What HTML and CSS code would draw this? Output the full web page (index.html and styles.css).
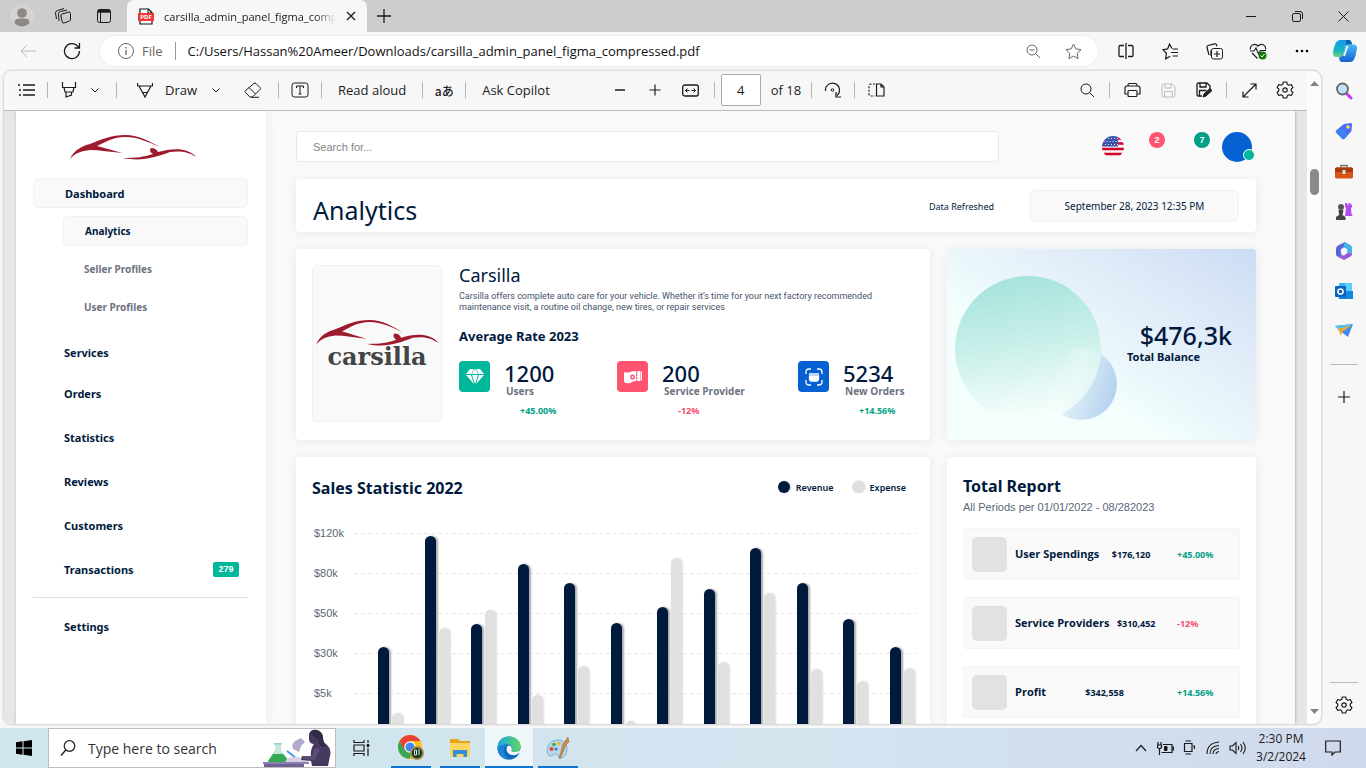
FILE: index.html
```html
<!DOCTYPE html>
<html lang="en">
<head>
<meta charset="utf-8">
<title>carsilla_admin_panel_figma_compressed.pdf</title>
<link rel="stylesheet" href="styles.css">
</head>
<body>

<svg class="defs" width="0" height="0" aria-hidden="true">
  <symbol id="car" viewBox="0 0 126 26">
    <path fill="#9d1b2c" d="M0 24C4 15 12 11 20 9C32 4 42 0 55 0C70 0 80 7 90 12C78 7 68 2 55 2C44 2 35 7 27 11C36 13 44 16 52 18C40 17 30 15 20 15C11 16 5 18 0 24Z"/>
    <path fill="#9d1b2c" d="M53 23C66 23 74 22 83 19C79 17 80 14 81 13C85 13 87 15 88 17C98 14 110 13 117 16C122 18 125 20 126 22C118 16 108 16 100 17C86 22 72 27 53 23Z"/>
  </symbol>
  <symbol id="gear" viewBox="0 0 18 18">
    <path fill="none" stroke="currentColor" stroke-width="1.2" stroke-linejoin="round" d="M7.3 1h3.4l.6 2.3 1.6.9 2.3-.7 1.7 3-1.7 1.6v1.8l1.7 1.6-1.7 3-2.3-.7-1.6.9-.6 2.3H7.300l-.6-2.300-1.600-.9-2.300.7-1.700-3 1.700-1.600V8.100L1.100 6.500l1.700-3 2.300.7 1.600-.9z"/>
    <circle cx="9" cy="9" r="2.200" fill="none" stroke="currentColor" stroke-width="1.200"/>
  </symbol>
  <symbol id="chev" viewBox="0 0 10 10"><path fill="none" stroke="currentColor" d="M1.500 3.500L5 7l3.500-3.500"/></symbol>
</svg>

<header class="titlebar">
  <button class="tbtn" aria-label="Profile"><svg width="22" height="22" viewBox="0 0 22 22"><circle cx="11" cy="11" r="10.500" fill="#d4d2cf" stroke="#dedcd8"/><circle cx="11" cy="8" r="4.800" fill="#8b8885"/><path d="M3.500 18c0-4 3-4.500 7.500-4.500s7.500.5 7.500 4.500a10 10 0 0 1-15 0z" fill="#8b8885"/></svg></button>
  <button class="tbtn" aria-label="Workspaces"><svg class="ic" width="18" height="18" viewBox="0 0 18 18"><path d="M8 7l7-2q1.500 0 1.500 1.500V12q0 1.500-1 2l-5.500 2q-1.500.3-1.800-1L7 9q-.2-1.500 1-2zM5 14l-.5-7.500q0-1.500 2-2L13 3M2.500 12L1.500 6q0-2 2-2.500L10 1.500"/></svg></button>
  <button class="tbtn" aria-label="Tab actions"><svg class="ic" width="16" height="16" viewBox="0 0 16 16"><rect x="1.500" y="1.500" width="13" height="13" rx="2"/><path d="M2 3.200h12" stroke-width="3"/><path d="M4.500 3v11"/></svg></button>
  <div class="tab">
    <svg width="16" height="17" viewBox="0 0 16 17"><path d="M2 1h8.500L14 4.500V16H2z" fill="#fff" stroke="#111" stroke-width="1.200"/><path d="M10 1v4h4" fill="none" stroke="#111"/><rect x="0" y="5" width="16" height="8" fill="#f03a3a"/><text x="8" y="11.300" font-size="6" text-anchor="middle" class="pdf-tag">PDF</text></svg>
    <span class="tab-title">carsilla_admin_panel_figma_comp</span>
    <button class="plain" aria-label="Close tab"><svg class="ic" width="10" height="10" viewBox="0 0 10 10"><path d="M1 1l8 8M9 1L1 9" stroke-width="1.300"/></svg></button>
  </div>
  <button class="new-tab" aria-label="New tab"><svg class="ic" width="14" height="14" viewBox="0 0 14 14"><path d="M7 0v14M0 7h14" stroke-width="1.300"/></svg></button>
  <div class="win">
    <button aria-label="Minimize"><svg class="ic" width="10" height="10" viewBox="0 0 10 10"><path d="M0 5.500h10"/></svg></button>
    <button aria-label="Restore"><svg class="ic" width="11" height="11" viewBox="0 0 11 11"><rect x=".5" y="2.500" width="8" height="8" rx="1.500"/><path d="M3 .5h5a2.500 2.500 0 0 1 2.500 2.500v5"/></svg></button>
    <button aria-label="Close"><svg class="ic" width="11" height="11" viewBox="0 0 11 11"><path d="M.5.5l10 10M10.500.5l-10 10"/></svg></button>
  </div>
</header>

<div class="addressbar">
  <button class="nav-btn faded" aria-label="Back"><svg class="ic" width="16" height="14" viewBox="0 0 16 14"><path d="M16 7H1M7 1L1 7l6 6"/></svg></button>
  <button class="nav-btn" aria-label="Refresh"><svg class="ic" width="18" height="18" viewBox="0 0 18 18"><path stroke-width="1.300" d="M16.500 9A7.500 7.500 0 1 1 14 3.500L16 5.500M16.500 1v5h-5"/></svg></button>
  <div class="pill">
    <svg class="ic grey" width="18" height="18" viewBox="0 0 18 18"><circle cx="9" cy="9" r="7.500"/><path d="M9 8v5M9 5v1.500" stroke-width="1.300"/></svg>
    <span class="scheme">File</span>
    <input class="url" aria-label="Address" value="C:/Users/Hassan%20Ameer/Downloads/carsilla_admin_panel_figma_compressed.pdf">
    <button class="pill-btn" aria-label="Zoom"><svg class="ic" width="15" height="15" viewBox="0 0 15 15"><circle cx="6" cy="6" r="5"/><path d="M9.700 9.700L14 14M3.500 6h5"/></svg></button>
    <button class="pill-btn" aria-label="Add to favorites"><svg class="ic" width="17" height="17" viewBox="0 0 17 17"><path d="M8.500 1l2.300 4.900 5.200.7-3.800 3.700.9 5.300-4.600-2.500-4.600 2.500.9-5.300L1 6.600l5.200-.7z" stroke-linejoin="round"/></svg></button>
  </div>
  <div class="ext">
    <button aria-label="Split screen"><svg class="ic" width="16" height="16" viewBox="0 0 16 16"><path stroke-width="1.300" d="M6 2.500H2q-1 0-1 1v9q0 1 1 1h4M10 2.500h4q1 0 1 1v9q0 1-1 1h-4M8 0v16"/></svg></button>
    <button aria-label="Favorites"><svg class="ic" width="17" height="17" viewBox="0 0 17 17"><path d="M10 5.500L7.500 1 5.600 5.900 1 6.600l3.400 3.700-.7 5.500 4.500-2.600M10.500 6H16M9 9.500h7M10.500 13H16" stroke-width="1.200"/></svg></button>
    <button aria-label="Collections"><svg class="ic" width="17" height="17" viewBox="0 0 17 17"><rect x="5.500" y="5.500" width="11" height="10.500" rx="2"/><path d="M11 8v6M8 11h6M3 12L1 4.500q-.3-1.500 1-2L8.500.800q1.500-.3 2 1l.5 1.500M5 13V7" stroke-width="1.200"/></svg></button>
    <button aria-label="Browser essentials"><svg width="18" height="17" viewBox="0 0 18 17"><path fill="none" stroke="#222" stroke-width="1.200" d="M1.500 6.500C.5 2 6-.5 9 3c3-3.500 8.500-1 7.500 3.500M1 8h4l2-3 2.500 6L11.500 7.500H17M3 10l5.500 5.500"/><circle cx="13.500" cy="12.500" r="4" fill="#107c10"/><path d="M11.500 12.500l1.500 1.500 2.500-3" fill="none" stroke="#fff"/></svg></button>
    <button aria-label="Settings and more"><svg width="14" height="4" viewBox="0 0 14 4"><circle cx="2" cy="2" r="1.300"/><circle cx="7" cy="2" r="1.300"/><circle cx="12" cy="2" r="1.300"/></svg></button>
  </div>
  <button class="copilot" aria-label="Copilot"><svg width="24" height="22" viewBox="0 0 24 22">
    <defs><linearGradient id="cp1" x2="0" y2="1"><stop stop-color="#1797e8"/><stop offset=".6" stop-color="#13b5c4"/><stop offset="1" stop-color="#6bd878"/></linearGradient><linearGradient id="cp2" x2="0" y2="1"><stop stop-color="#46b8f5"/><stop offset="1" stop-color="#1560d4"/></linearGradient></defs>
    <path fill="url(#cp1)" d="M7 0h9q2 0 2.500 2l.5 2h-4q-2 0-3 3l-2 7q-1 3-4 3H3q-3 0-3-4Q1 6 3 2.500 4.500 0 7 0z"/>
    <path fill="url(#cp2)" d="M17 22H9q-2 0-2.500-2L6 17q3 0 4-3l2-7q1-2.500 4-2.500h5q3 0 3 4-1 7-3 11-1.500 2.500-4 2.500z"/>
    <path fill="#eafaff" d="M13.500 6h2l-3.500 10h-2z"/><path fill="#0d5fae" d="M13 0h3q2 0 3 4.500h-4q-2 0-2 1z"/></svg></button>
</div>

<div class="main">
  <section class="viewer">
    <div class="viewer-left">
      <div class="toolbar">
        <div class="tools">
          <button class="tool" aria-label="Contents"><svg class="ic" width="17" height="14" viewBox="0 0 17 14"><path stroke-width="1.300" d="M5 2h12M5 7h12M5 12h12M0 2h2M1 7h2M1 12h2"/></svg></button>
          <i class="sep"></i>
          <button class="tool" aria-label="Highlight"><svg class="ic" width="16" height="16" viewBox="0 0 16 16"><path stroke-width="1.200" d="M1.500 0v5.500h13V0M3 5.500L4 10h8l1-4.500M5 10v5l5.500-2V10"/></svg></button>
          <button class="tool" aria-label="Highlight options"><svg width="10" height="10"><use href="#chev"/></svg></button>
          <i class="sep"></i>
          <button class="tool wide" aria-label="Draw"><svg class="ic" width="16" height="16" viewBox="0 0 16 16"><path stroke-width="1.200" d="M.5 1v3h15V1M2 4l6 11 6-11M5.500 10.500h5"/></svg><span>Draw</span></button>
          <button class="tool" aria-label="Draw options"><svg width="10" height="10"><use href="#chev"/></svg></button>
          <button class="tool erase" aria-label="Erase"><svg class="ic" width="18" height="16" viewBox="0 0 18 16"><path d="M10 1.500q1-1 2 0L16 5.500q1 1 0 2L9.500 14q-1 1-2 1H6L1.500 10.500q-1-1 0-2zM5 5.500l6.500 6.500M7 15.300h8"/></svg></button>
          <i class="sep"></i>
          <button class="tool" aria-label="Add text"><svg class="ic" width="18" height="16" viewBox="0 0 18 16"><rect x="1" y="1" width="16" height="14" rx="2.500"/><path d="M5.500 6V4h7v2M9 4v8M7.500 12h3"/></svg></button>
          <i class="sep"></i>
          <button class="tool text">Read aloud</button>
          <i class="sep"></i>
          <button class="tool glyph" aria-label="Translate">aあ</button>
          <i class="sep"></i>
          <button class="tool text">Ask Copilot</button>
        </div>
        <div class="pager">
          <button class="tool zoom" aria-label="Zoom out"><svg class="ic" width="12" height="12" viewBox="0 0 12 12"><path stroke-width="1.500" d="M1 6h10"/></svg></button>
          <button class="tool zoom" aria-label="Zoom in"><svg class="ic" width="12" height="12" viewBox="0 0 12 12"><path stroke-width="1.200" d="M.5 6h11M6 .5v11"/></svg></button>
          <button class="tool zoom" aria-label="Fit to width"><svg class="ic" width="17" height="13" viewBox="0 0 17 13"><rect x=".7" y="1" width="15.600" height="11" rx="2" stroke-width="1.300"/><path d="M3.500 6.500h4M9.500 6.500h4M5.500 4.500l-2 2 2 2M11.500 4.500l2 2-2 2"/></svg></button>
          <i class="sep"></i>
          <input class="page-no" aria-label="Page number" value="4">
          <span class="page-of">of 18</span>
          <i class="sep"></i>
          <button class="tool" aria-label="Rotate"><svg class="ic" width="18" height="18" viewBox="0 0 18 18"><path stroke-width="1.200" d="M1.500 10A7 7 0 1 1 13 14.500M12 11v5h5"/><circle cx="8.500" cy="9" r="1.300"/></svg></button>
          <i class="sep"></i>
          <button class="tool" aria-label="Page view"><svg class="ic" width="17" height="14" viewBox="0 0 17 14"><path d="M8.500 1H13l3 3v9H8.500zM13 1v3h3" stroke-width="1.200"/><path d="M7 1H3Q1 1 1 3v8q0 2 2 2h4" stroke-dasharray="2 1.500" stroke-width="1.200"/></svg></button>
        </div>
        <div class="file-tools">
          <button class="tool" aria-label="Find"><svg class="ic" width="15" height="15" viewBox="0 0 15 15"><circle cx="6" cy="6" r="5"/><path d="M9.700 9.700L14 14"/></svg></button>
          <i class="sep"></i>
          <button class="tool" aria-label="Print"><svg class="ic" width="17" height="16" viewBox="0 0 17 16"><path stroke-width="1.200" d="M4 4V3q0-1.500 1.500-1.500h6Q13 1.500 13 3v1M3.500 12H1V6.500Q1 4 3 4h11q2 0 2 2.500V12h-2.500"/><rect x="4" y="8.500" width="9" height="6" rx="1" stroke-width="1.200"/></svg></button>
          <button class="tool faded" aria-label="Save"><svg class="ic" width="15" height="15" viewBox="0 0 15 15"><path d="M1 2.500Q1 1 2.500 1H11l3 3v8.500q0 1.500-1.500 1.500h-10Q1 14 1 12.500zM4 1v4h6V1M3.500 14V8.500h8V14"/></svg></button>
          <button class="tool" aria-label="Save as"><svg class="ic" width="16" height="16" viewBox="0 0 16 16"><path stroke-width="1.300" d="M6 14H2.500Q1 14 1 12.500v-10Q1 1 2.500 1H11l3 3v3M4 1v4h6V1M3.500 14V8.500h7"/><path d="M7 15l1-3 6-5.500 2 2-6 5.500z" fill="#222"/></svg></button>
          <i class="sep"></i>
          <button class="tool" aria-label="Full screen"><svg class="ic" width="15" height="15" viewBox="0 0 15 15"><path stroke-width="1.200" d="M1 14L14 1M8.500 1H14v5.500M1 8.500V14h5.500"/></svg></button>
          <button class="tool" aria-label="PDF settings"><svg width="18" height="18"><use href="#gear"/></svg></button>
        </div>
      </div>

      <div class="canvas">
        <div class="page">
          <nav class="side">
            <svg class="side-logo" width="126" height="26"><use href="#car"/></svg>
            <a class="link boxed" href="#">Dashboard</a>
            <div class="sub">
              <a class="link boxed" href="#">Analytics</a>
              <a class="link muted" href="#">Seller Profiles</a>
              <a class="link muted" href="#">User Profiles</a>
            </div>
            <div class="links">
              <a class="link tight" href="#">Services</a>
              <a class="link" href="#">Orders</a>
              <a class="link" href="#">Statistics</a>
              <a class="link" href="#">Reviews</a>
              <a class="link" href="#">Customers</a>
              <a class="link" href="#">Transactions <span class="count">279</span></a>
            </div>
            <a class="link settings" href="#">Settings</a>
          </nav>

          <main class="dash">
            <div class="top">
              <input class="search" type="search" aria-label="Search" placeholder="Search for...">
              <div class="top-right">
                <svg width="22" height="22" viewBox="0 0 22 22"><clipPath id="fl"><circle cx="11" cy="11" r="11"/></clipPath><g clip-path="url(#fl)"><path fill="#f4f4f6" d="M0 0h22v22H0z"/><path stroke="#d80027" stroke-width="2.600" d="M11 2.500h11M11 7.500h11M0 13h22M0 18h22"/><path fill="#3a52a8" d="M0 0h16v10.500H0z"/><path stroke="#e8ecf8" stroke-width="1" stroke-dasharray="1 2" d="M3 2.500h13M1.500 5.500h14M3 8.500h13"/></g></svg>
                <span class="dot pink">2</span>
                <span class="dot green">7</span>
                <span class="avatar"></span>
              </div>
            </div>

            <section class="card heading">
              <h1>Analytics</h1>
              <span class="refreshed">Data Refreshed</span>
              <span class="date">September 28, 2023 12:35 PM</span>
            </section>

            <div class="cols">
              <section class="card company">
                <div class="brand">
                  <svg width="122" height="27" viewBox="0 0 126 26" preserveAspectRatio="none"><use href="#car" width="126" height="26"/></svg>
                  <span>carsilla</span>
                </div>
                <div class="info">
                  <h2>Carsilla</h2>
                  <p>Carsilla offers complete auto care for your vehicle. Whether it’s time for your next factory recommended<br>maintenance visit, a routine oil change, new tires, or repair services</p>
                  <h3>Average Rate 2023</h3>
                  <div class="stats">
                    <div class="stat">
                      <span class="tile teal"><svg width="18" height="16" viewBox="0 0 18 16" fill="#fff"><path d="M4 0h3.500L5.500 5H0zM8 .500h2L12 5H6zM10.500 0H14l4 5h-5.500zM0 6h5l3 9zM6 6h6L9 15zM13 6h5l-8 9z"/></svg></span>
                      <div><b>1200</b><small>Users</small><em>+45.00%</em></div>
                    </div>
                    <div class="stat">
                      <span class="tile rose"><svg width="18" height="14" viewBox="0 0 18 14" fill="#fff"><path d="M0 2q3 1 6 0t6-1v10q-3 0-6 2-3 1-6-1zM12.500 1H16v10h-3.500zM16.500 1.500H18v9h-1.500z"/><circle cx="8.500" cy="7" r="2.500" fill="#ff5470"/><circle cx="8.500" cy="7" r="1"/><path stroke="#ff5470" stroke-dasharray="2 1" d="M12.800 1v11"/></svg></span>
                      <div><b>200</b><small>Service Provider</small><em class="down">-12%</em></div>
                    </div>
                    <div class="stat">
                      <span class="tile blue"><svg width="18" height="18" viewBox="0 0 18 18" fill="none" stroke="#fff" stroke-width="1.300"><path d="M1 6V4q0-3 3-3h2M12 1h2q3 0 3 3v2M17 12v2q0 3-3 3h-2M6 17H4q-3 0-3-3v-2M4 6h10"/><path d="M4.500 8h9v2.500q0 2.500-2 2.500h-5q-2 0-2-2.500z" fill="#fff"/></svg></span>
                      <div><b>5234</b><small>New Orders</small><em>+14.56%</em></div>
                    </div>
                  </div>
                </div>
              </section>

              <section class="card balance">
                <svg class="bubbles" width="180" height="190" viewBox="0 0 180 190">
                  <defs>
                    <linearGradient id="b1" x1=".4" y1="0" x2=".55" y2="1"><stop stop-color="#a5e3dc"/><stop offset=".45" stop-color="#c8efe9"/><stop offset="1" stop-color="#fafffe"/></linearGradient>
                    <linearGradient id="b2" x1="0" y1=".35" x2="1" y2=".65"><stop stop-color="#f2fcfc"/><stop offset=".15" stop-color="#f2fcfc"/><stop offset="1" stop-color="#b2d0ef"/></linearGradient>
                    <linearGradient id="b3" x1="0" y1=".3" x2="1" y2=".7"><stop offset=".1" stop-color="#f8fffe" stop-opacity="0"/><stop offset=".4" stop-color="#effbf9" stop-opacity=".6"/><stop offset="1" stop-color="#c5e9e8" stop-opacity=".8"/></linearGradient>
                    <clipPath id="bc"><circle cx="81" cy="100" r="73"/></clipPath>
                  </defs>
                  <circle cx="134" cy="135" r="36" fill="url(#b2)"/>
                  <circle cx="81" cy="100" r="73" fill="url(#b1)"/>
                  <g clip-path="url(#bc)"><circle cx="134" cy="135" r="36" fill="url(#b3)" opacity=".7"/></g>
                </svg>
                <div class="total"><b>$476,3k</b><span>Total Balance</span></div>
              </section>

              <section class="card sales">
                <div class="sales-head">
                  <h3>Sales Statistic 2022</h3>
                  <span class="key"><i class="navy"></i>Revenue</span>
                  <span class="key"><i></i>Expense</span>
                </div>
                <div class="chart">
                  <div class="axis"><span>$120k</span><span>$80k</span><span>$50k</span><span>$30k</span><span>$5k</span></div>
                  <div class="lines"><i></i><i></i><i></i><i></i><i></i></div>
                  <div class="bars">
                    <div><i style="height:113px"></i><i style="height:47px"></i></div>
                    <div><i style="height:224px"></i><i style="height:132px"></i></div>
                    <div><i style="height:136px"></i><i style="height:150px"></i></div>
                    <div><i style="height:196px"></i><i style="height:65px"></i></div>
                    <div><i style="height:177px"></i><i style="height:94px"></i></div>
                    <div><i style="height:137px"></i><i style="height:39px"></i></div>
                    <div><i style="height:153px"></i><i style="height:202px"></i></div>
                    <div><i style="height:171px"></i><i style="height:98px"></i></div>
                    <div><i style="height:212px"></i><i style="height:167px"></i></div>
                    <div><i style="height:177px"></i><i style="height:91px"></i></div>
                    <div><i style="height:141px"></i><i style="height:79px"></i></div>
                    <div><i style="height:113px"></i><i style="height:92px"></i></div>
                  </div>
                </div>
              </section>

              <section class="card report">
                <h3>Total Report</h3>
                <p>All Periods per 01/01/2022 - 08/282023</p>
                <div class="row"><i></i><b>User Spendings</b><span>$176,120</span><em>+45.00%</em></div>
                <div class="row"><i></i><b>Service Providers</b><span>$310,452</span><em class="down">-12%</em></div>
                <div class="row"><i></i><b>Profit</b><span>$342,558</span><em>+14.56%</em></div>
              </section>
            </div>
          </main>
        </div>
      </div>
    </div>
    <div class="scroll">
      <svg width="9" height="5" viewBox="0 0 9 5"><path d="M0 5l4.500-5L9 5z" fill="#858585"/></svg>
      <i></i>
      <svg width="9" height="5" viewBox="0 0 9 5"><path d="M0 0l4.500 5L9 0z" fill="#858585"/></svg>
    </div>
  </section>

  <aside class="edge-bar">
    <button aria-label="Search"><svg width="18" height="18" viewBox="0 0 18 18"><path d="M11 11l5 5" stroke="#c83df0" stroke-width="3" stroke-linecap="round"/><circle cx="7.500" cy="7" r="5.500" fill="#bfe3fa" stroke="#666" stroke-width="1.800"/></svg></button>
    <button aria-label="Shopping"><svg width="18" height="18" viewBox="0 0 18 18"><path d="M9 2l7-1q1 0 1 1l-.5 7-7 8q-1 .5-2 0L1 10.500q-.5-1 0-2z" fill="#4a6ff0"/><path d="M1 8.500l9-2 2 8-3 2.500q-1 .5-2 0L1 10.500z" fill="#3a8cf5" opacity=".6"/><circle cx="13" cy="5" r="1.800" fill="#ffd95a"/></svg></button>
    <button aria-label="Tools"><svg width="18" height="15" viewBox="0 0 18 15"><path d="M6 4V1.500h6V4" fill="none" stroke="#777" stroke-width="1.500"/><rect y="3.500" width="18" height="11" rx="1.500" fill="#d5521d"/><path d="M0 5q0-1.500 1.500-1.500h15Q18 3.500 18 5v3H0z" fill="#a93a10"/><rect x="7.500" y="6" width="3" height="4" fill="#d9e4e8"/></svg></button>
    <button aria-label="Games"><svg width="18" height="18" viewBox="0 0 18 18"><path d="M10 1h2v1.500h1.500V1h2v1.500H17V5l-1 1 .5 6q1 .5 1 2H10l1-8-1-1z" fill="#b44cf0"/><circle cx="6" cy="5" r="3" fill="#555"/><path d="M3.500 8h5l-1 5 3 2v3H1v-3l3-2z" fill="#444"/></svg></button>
    <button aria-label="Microsoft 365"><svg width="18" height="18" viewBox="0 0 18 18"><path fill="#5a63d8" d="M10 0L3 3.500Q1 4.500 1 7v5q0 2 2 3l3.500-1.500V7.500L13 4z"/><path fill="#45b4ea" d="M10 0l5.500 3Q17 4 17 6v7l-5-2.500V7L8 5.500z"/><path fill="#9a5cd0" d="M17 12q0 1.500-1.500 2.500L10 17.500q-1 .5-2 0L3 15l4-2 2 .5 4-3z"/><path fill="#f7f7f7" d="M9 5.500l3.200 1.800v3.600L9 12.600l-3.200-1.700V7.300z"/></svg></button>
    <button aria-label="Outlook"><svg width="18" height="17" viewBox="0 0 18 17"><rect x="4" width="13" height="15" rx="1" fill="#35b8f1"/><path d="M10 0h7v8h-7z" fill="#58d0fa"/><path d="M3 8l15 0v8H4z" fill="#1588dc"/><rect y="3" width="11" height="11" rx="1" fill="#0a64bd"/><circle cx="5.500" cy="8.500" r="2.600" fill="none" stroke="#fff" stroke-width="1.500"/></svg></button>
    <button aria-label="Drop"><svg width="18" height="14" viewBox="0 0 18 14"><path d="M0 2L18 0l-5 13-4-3z" fill="#3f8cf0"/><path d="M0 2L18 0 5 7z" fill="#4dc3f5"/><path d="M3 5L17 1 7 8l-1 4z" fill="#f0a92c"/></svg></button>
    <hr>
    <button aria-label="Customize"><svg class="ic" width="12" height="12" viewBox="0 0 12 12"><path stroke-width="1.200" d="M6 0v12M0 6h12"/></svg></button>
    <hr class="low">
    <button aria-label="Sidebar settings"><svg width="18" height="18"><use href="#gear"/></svg></button>
  </aside>
</div>

<footer class="taskbar">
  <button class="start" aria-label="Start"><svg width="16" height="16" viewBox="0 0 16 16"><path d="M0 2.300L6.500 1.300V7.500H0zM7.500 1.200L16 0v7.500H7.500zM0 8.500h6.500v6.200L0 13.700zM7.500 8.500H16V16l-8.500-1.200z"/></svg></button>
  <div class="find">
    <svg class="ic" width="16" height="16" viewBox="0 0 16 16"><circle cx="9.500" cy="6" r="5.300" stroke-width="1.200"/><path d="M5.800 10L1 15.500" stroke-width="1.300"/></svg>
    <input aria-label="Type here to search" placeholder="Type here to search">
    <svg class="lab" width="72" height="38" viewBox="0 0 72 38">
      <path fill="#6f6396" d="M1 34h40v4H1z"/><path fill="#8a80b0" d="M0 33h46v2H0z"/>
      <path fill="#c6e8dc" d="M12 14h6v7l8 11q0 1-1 1H6q-1 0-1-1l7-11z"/><path fill="#35a853" d="M10 25h10l6 7q0 1-1 1H6l-1-1z"/><path fill="#9bc8c8" d="M11 14h8v1.500h-8z"/>
      <path stroke="#3f9be8" stroke-width="2" d="M24 22l9 7"/>
      <path fill="#d8cfe8" d="M24 30q4-3 10-2t12 2l-1 3H22z"/><path fill="#b5a8cf" d="M30 20q-2-5 2-8l6-3 4 4-4 4-2 6z"/>
      <path fill="#453a5e" d="M46 5q2-5 8-4 6 2 6 8 0 4 3 6 6 5 4 12-1 5-2 10H49l-1-5-10-1 1-4 9 1q-1-8 3-13-4 0-5-4z"/>
      <path fill="#332b47" d="M47 4q2-4 7-3 6 2 6 8 0 5 4 8l-4 1q-5-2-5-8-3 0-4-3z"/><path fill="#594c78" d="M51 20q4-2 6 1l-5 10-12-1 1-3 8 0z"/>
    </svg>
  </div>
  <button class="view" aria-label="Task view"><svg class="ic" width="17" height="16" viewBox="0 0 17 16"><path stroke-width="1.200" d="M1 0v2.500h10V0M1 16v-2.500h10V16M1 5h10v6H1zM15 0v3M15 8v8"/><path d="M15 4v3" stroke-width="2.500"/></svg></button>
  <button class="app open" aria-label="Chrome"><svg width="26" height="26" viewBox="0 0 26 26"><circle cx="12" cy="12" r="12" fill="#fbc116"/><path d="M1.600 6A12 12 0 0 1 22.400 6H12z" fill="#ea4335"/><path d="M1.600 6A12 12 0 0 0 11 24l4-7-8-3z" fill="#34a853"/><path d="M1.600 6H12l-5.500 9z" fill="#ea4335"/><circle cx="12" cy="12" r="5.700" fill="#fff"/><circle cx="12" cy="12" r="4.500" fill="#4285f4"/><circle cx="19" cy="18" r="7" fill="#b08b4c"/><circle cx="19" cy="18" r="5.200" fill="#153b2c"/><path d="M18.500 15h-2v5h2zM21 14v6" stroke="#e8e4c8" fill="none"/></svg></button>
  <button class="app open" aria-label="File Explorer"><svg width="22" height="20" viewBox="0 0 22 20"><path d="M1 1h8l2 2h10v15H1z" fill="#e8a317"/><path d="M1 5h20v14H1z" fill="#fcd462"/><path d="M4 12h14v7h-3.500v-3h-7v3H4z" fill="#2f8fdc"/></svg></button>
  <button class="app open current" aria-label="Edge"><svg width="24" height="24" viewBox="0 0 24 24"><defs><linearGradient id="eg" x2="1"><stop stop-color="#1ba5e8"/><stop offset="1" stop-color="#5fd85c"/></linearGradient></defs><circle cx="12" cy="12" r="11.500" fill="#1067b8"/><path d="M.5 12C1 4 6 .5 12 .5c7 0 11.500 4.500 11.500 9.500 0 4-3 6-6 6-2 0-3.500-.5-3-2 1.500-2 .5-5.500-4-5.500C6 8.500 2 10 .5 12z" fill="url(#eg)"/><path d="M.5 12c2-3 6-4.500 10-3-3 1-4.500 4-3.500 7.500 1 4 4 6.500 7.500 6.600C7 24.500.5 20 .5 12z" fill="#1a86d8"/><path d="M10.500 10c-2 3-1 8 4.500 9 3 .5 5.500-.5 7-2 1.500-1 2-.5 1.500.5l-1 2 2 1V12c-1.500 3-4 4-7 4-2 0-3.500-.5-3-2 .8-1.500.3-3-1-4-1-.7-2-.8-3 0z" fill="#eef6fa"/></svg></button>
  <button class="app open" aria-label="Paint"><svg width="24" height="24" viewBox="0 0 24 24"><path d="M1 15C1 8 6 4 12 4s9 4 9 9-3 9-7 9c-3 0-1-4-4-4-3 0-3 3-6 2q-3-1-3-5z" fill="#b8d8ea" stroke="#7fb0cf"/><circle cx="5.500" cy="13" r="2" fill="#e0403a"/><circle cx="8" cy="8.500" r="1.800" fill="#42a548"/><circle cx="13" cy="7.500" r="1.800" fill="#f0b62c"/><circle cx="10" cy="13" r="1.600" fill="#3f76d0"/><path d="M22 1l1 5-3 3-6 14-1-1 4-14z" fill="#c98a4d" stroke="#9a6a3a" stroke-width=".5"/></svg></button>
  <div class="tray">
    <button aria-label="Show hidden icons"><svg class="ic" width="12" height="8" viewBox="0 0 12 8"><path d="M1 7l5-5.500L11 7" stroke-width="1.200"/></svg></button>
    <button aria-label="Battery"><svg class="ic" width="17" height="14" viewBox="0 0 17 14"><path stroke-width="1.200" d="M6 3.500h9v8H4.500M15 6h1.500v3H15M1 1v3M4 1v3M.5 4h4v2.500l-1 1h-2l-1-1zM2.500 7.500V14"/><path d="M7.500 5.500h2.500v4H7.500z" fill="#111"/></svg></button>
    <button aria-label="Device"><svg class="ic" width="12" height="16" viewBox="0 0 12 16"><path stroke-width="1.200" d="M2.500 1h5.500M1.500 3.500h7.500v8H1.500zM2.500 14h5.500M10 6h1.500v3"/></svg></button>
    <button aria-label="Network"><svg class="ic" width="14" height="14" viewBox="0 0 14 14"><path stroke-width="1.100" d="M1 13Q1 2 13 1M4 13Q4 5 13 4.500M7 13q0-5 6-5.500M10 13q0-2 3-2.500"/></svg></button>
    <button aria-label="Volume"><svg class="ic" width="17" height="14" viewBox="0 0 17 14"><path stroke-width="1.100" d="M1 5h2.500L7 1.500v11L3.500 9H1zM9 5q1.500 2 0 4M11.500 3q3 4 0 8M14 1q4.500 6 0 12"/></svg></button>
    <div class="clock">2:30 PM<br>3/2/2024</div>
    <button class="notes" aria-label="Notifications"><svg class="ic" width="16" height="16" viewBox="0 0 16 16"><path stroke-width="1.200" d="M.7 1h14.600v11H10l-3 3v-3H.7z"/></svg></button>
  </div>
</footer>
</body>
</html>
```
FILE: styles.css
```css
* { box-sizing: border-box; }
html, body { height: 100%; }
body {
  margin: 0; display: flex; flex-direction: column; overflow: hidden;
  background: #f7f7f7; color: #1b1b1b;
  font-family: "Open Sans", "Noto Sans", "Noto Sans CJK JP", sans-serif; font-size: 13px;
}
button { border: 0; padding: 0; background: none; color: inherit; font: inherit; display: flex; align-items: center; justify-content: center; flex: none; }
input { font: inherit; color: inherit; border: 0; padding: 0; outline: 0; min-width: 0; }
h1, h2, h3, p { margin: 0; }
a { color: inherit; text-decoration: none; }
em, i { font-style: normal; }
svg { flex: none; display: block; }
.defs { position: absolute; }
.ic { fill: none; stroke: currentColor; }
.grey { color: #666; }
.faded { color: #bdbdbd; }

/* Window title bar */
.titlebar { flex: none; height: 32px; display: flex; background: #cdcdcd; padding-left: 1px; }
.tbtn { width: 41px; }
.tab { width: 240px; margin-left: 3px; padding: 0 11px; display: flex; align-items: center; gap: 10px; background: #f7f7f7; border-radius: 7px 7px 0 0; font-size: 11px; }
.tab-title { flex: 1; min-width: 0; overflow: hidden; white-space: nowrap; -webkit-mask-image: linear-gradient(90deg, #000 88%, transparent); mask-image: linear-gradient(90deg, #000 88%, transparent); }
.pdf-tag { font-family: "Open Sans", sans-serif; font-weight: 700; fill: #fff; }
.new-tab { width: 34px; }
.win { margin-left: auto; display: flex; }
.win button { width: 46px; }

/* Address bar */
.addressbar { flex: none; height: 38px; display: flex; align-items: center; padding-left: 6px; }
.nav-btn { width: 44px; height: 32px; }
.pill { flex: 1; height: 30px; margin: 0 6px; padding: 0 5px 0 17px; display: flex; align-items: center; background: #fff; border-radius: 15px; box-shadow: 0 0 2px #ddd; }
.scheme { margin-left: 7px; padding-right: 12px; border-right: 1px solid #999; color: #666; }
.url { flex: 1; margin-left: 12px; background: none; color: #111; }
.pill-btn { width: 40px; color: #666; }
.ext { display: flex; }
.ext button { width: 44px; }
.copilot { width: 42px; }

/* Viewer frame */
.main { flex: 1; min-height: 0; display: flex; padding: 0 0 3px 3px; }
.viewer { flex: 1; min-width: 0; display: flex; border: 1px solid #dcdcdc; border-radius: 9px; overflow: hidden; background: #fcfcfc; box-shadow: 0 0 2px #ccc; }
.viewer-left { flex: 1; min-width: 0; display: flex; flex-direction: column; }
.toolbar { flex: none; height: 40px; display: flex; align-items: center; padding-bottom: 1px; background: #f7f7f7; border-bottom: 1px solid #bbb; }
.tools, .pager, .file-tools { display: flex; align-items: center; }
.tools { padding-left: 9px; }
.tool { width: 26px; height: 28px; white-space: nowrap; }
.tool.text { width: auto; padding: 0 6px; margin: 0 2px; }
.tool.wide { width: auto; padding: 0 6px 0 12px; gap: 12px; }
.tool.erase { margin: 0 4px 0 11px; }
.tool.glyph { font-family: "Noto Sans CJK JP", sans-serif; font-size: 12px; font-weight: 500; }
.sep { width: 1px; height: 16px; margin: 0 8px; background: #b5b5b5; }
.pager { margin-left: 45px; }
.pager .tool { width: 30px; }
.pager .sep { margin: 0 6px; }
.pager .zoom { width: 35px; }
.page-no { width: 40px; height: 32px; border: 1px solid #aaa; border-radius: 2px; background: #fff; text-align: center; }
.page-of { margin: 0 4px 0 10px; }
.file-tools { margin-left: auto; padding-right: 4px; }
.file-tools .tool { width: 36px; }
.file-tools .sep { margin: 0 4px; }
.scroll { flex: none; width: 14px; display: flex; flex-direction: column; align-items: center; padding: 10px 0; }
.scroll i { width: 9px; height: 26px; margin: 83px 0 auto; border-radius: 5px; background: #8a8a8a; }
.canvas { flex: 1; min-height: 0; overflow: hidden; display: flex; background: #e6e6e6; padding: 0 12px; }
.page { flex: 1; min-width: 0; display: flex; background: #f9f9f9; box-shadow: 0 0 3px #999; }
.page { font-family: "Noto Sans", "Open Sans", sans-serif; color: #001a3d; }

/* Dashboard navigation */
.side { flex: none; width: 250px; padding: 24px 18px 0 17px; background: #fff; box-shadow: 0 0 12px #ececec; font-size: 11px; font-weight: 700; }
.side-logo { margin: 0 0 17px 37px; }
.link { display: flex; align-items: center; height: 30px; padding-left: 31px; }
.boxed { background: #f9f9f9; border: 1px solid #f2f2f2; border-radius: 5px; }
.sub { margin: 8px 0 0 30px; display: flex; flex-direction: column; gap: 8px; font-size: 10px; }
.sub .link { padding-left: 21px; }
.muted { color: #6b7280; }
.links { display: flex; flex-direction: column; gap: 14px; padding: 15px 9px 13px 0; border-bottom: 1px solid #dedede; }
.tight { margin-bottom: -3px; }
.count { margin-left: auto; width: 26px; border-radius: 2px; background: #00b69b; color: #fff; font: 700 9px/15px "Liberation Sans", sans-serif; text-align: center; }
.settings { margin-top: 13px; }

/* Dashboard content */
.dash { flex: 1; min-width: 0; padding: 20px 39px 0 30px; display: flex; flex-direction: column; gap: 17px; }
.card { background: #fff; border-radius: 4px; box-shadow: 0 1px 8px #e9e9e9; }
.top { flex: none; display: flex; justify-content: space-between; }
.search { flex: 0 1 703px; height: 31px; padding: 0 16px; border: 1px solid #e8e8e8; border-radius: 4px; background: #fff; font: 11px "Liberation Sans", sans-serif; }
.search::placeholder { color: #858585; }
.top-right { display: flex; align-items: center; }
.dot { width: 16px; height: 16px; margin: -14px 0 0 25px; border-radius: 8px; color: #fff; font: 700 9px/16px "Liberation Sans", sans-serif; text-align: center; }
.dot + .dot { margin-left: 29px; }
.pink { background: #ff5470; }
.green { background: #00a085; }
.avatar { position: relative; width: 30px; height: 30px; margin: 0 4px 0 12px; border-radius: 50%; background: #0560d2; }
.avatar::after { content: ""; position: absolute; right: -3px; bottom: 1px; width: 10px; height: 10px; border-radius: 50%; background: #00b69b; border: 1px solid #fff; }
.heading { flex: none; display: flex; align-items: center; padding: 7px 17px 6px; }
h1 { font-size: 25px; line-height: 30px; font-weight: 400; margin: 9px auto 1px 0; }
.refreshed { font-size: 9px; margin-right: 36px; }
.date { width: 209px; font-size: 10px; line-height: 30px; text-align: center; background: #f9f9f9; border: 1px solid #f1f1f1; border-radius: 5px; }
.cols { display: grid; grid-template-columns: minmax(0, 634fr) minmax(0, 309fr); gap: 17px; }

.company { padding: 16px 16px 18px; display: flex; gap: 17px; }
.brand { flex: none; width: 130px; height: 157px; display: flex; flex-direction: column; align-items: center; justify-content: center; background: #f9f9f9; border: 1px solid #f1f1f1; border-radius: 5px; }
.brand span { color: #444; font: 700 24px/20px "DejaVu Serif", serif; }
.info { flex: 1; min-width: 0; }
h2 { font-size: 18px; line-height: 20px; font-weight: 400; }
.info p { margin-top: 6px; color: #46536a; font: 9px/11px Roboto, sans-serif; white-space: nowrap; }
.info h3 { margin-top: 14px; font: 700 13px/18px "Noto Sans", sans-serif; }
.stats { display: grid; grid-template-columns: 158fr 181fr 116fr; margin-top: 16px; }
.stat { display: flex; gap: 14px; }
.tile { flex: none; width: 31px; height: 31px; display: flex; align-items: center; justify-content: center; border-radius: 4px; }
.teal { background: #00b69b; }
.rose { background: #ff5470; }
.blue { background: #0560d2; }
.stat div { display: flex; flex-direction: column; }
.stat b { font-size: 22px; line-height: 24px; font-weight: 500; }
.stat small { margin-left: 2px; color: #6b7280; font: 700 10px/12px "Open Sans", sans-serif; }
em { color: #00a085; font-size: 9px; font-weight: 700; }
.stat em { margin: 8px 0 0 16px; line-height: 12px; }
.down { color: #f94d6a; }

.balance { position: relative; display: flex; align-items: center; justify-content: flex-end; padding: 0 24px 6px 0; background: linear-gradient(to bottom left, #cbdcf4 0%, #dde9f7 25%, #ebf6fb 50%, #f4fffd 66%); }
.bubbles { position: absolute; left: 0; top: 0; }
.total { width: 105px; display: flex; flex-direction: column; }
.total b { font-size: 25px; line-height: 30px; font-weight: 500; text-align: right; }
.total span { font-size: 11px; line-height: 14px; font-weight: 700; }

.sales { padding: 17px 14px 0 16px; }
.sales h3, .report h3 { font-size: 16px; line-height: 24px; }
.sales-head { display: flex; align-items: center; gap: 18px; padding-right: 10px; }
.sales-head h3 { margin-right: auto; padding-top: 2px; }
.key { display: flex; align-items: center; gap: 6px; font-size: 9px; font-weight: 600; }
.key i { width: 12px; height: 12px; border-radius: 6px; background: #e0e0e0; box-shadow: 1px 0 2px #ccc; }
.key .navy { background: #001a3d; }
.chart { display: grid; grid-template-columns: 42px 1fr; margin-top: 25px; height: 235px; }
.axis { display: flex; flex-direction: column; padding-left: 2px; color: #5b6678; font: 11px/16px "Liberation Sans", sans-serif; gap: 24px; }
.lines { grid-area: 1 / 2; display: flex; flex-direction: column; gap: 39px; padding-top: 8px; }
.lines i { height: 1px; background: repeating-linear-gradient(90deg, #e6e6e6 0 4px, transparent 4px 7px); flex: none; }
.bars { grid-area: 1 / 2; display: flex; justify-content: space-between; align-items: flex-end; padding: 0 1px 0 24px; }
.bars div { display: flex; align-items: flex-end; gap: 3px; }
.bars i { width: 11px; border-radius: 6px 6px 0 0; background: #001a3d; box-shadow: 2px 0 2px #aaa; }
.bars i + i { background: #e0e0e0; box-shadow: 1px 0 2px #e0e0e0; }

.report { padding: 17px 16px 0; }
.report p { margin-bottom: 12px; color: #5b6678; font: 11px/18px "Liberation Sans", sans-serif; }
.row { display: flex; align-items: center; height: 52px; margin-bottom: 17px; padding: 0 8px; background: #f9f9f9; border: 1px solid #f4f4f4; border-radius: 3px; }
.row i { width: 35px; height: 35px; margin-right: 8px; border-radius: 5px; background: #e2e2e2; }
.row b { font: 700 11px/16px "Open Sans", sans-serif; }
.row span { flex: 1; padding-right: 14px; text-align: center; font-size: 9px; font-weight: 700; }
.row em { width: 54px; }

/* Browser side bar */
.edge-bar { flex: none; width: 44px; display: flex; flex-direction: column; align-items: center; padding-top: 1px; }
.edge-bar button { width: 40px; height: 40px; }
.edge-bar hr { width: 28px; margin: 13px 0 12px; border: 0; border-top: 1px solid #bbb; }
.edge-bar .low { margin: auto 0 2px; }

/* Taskbar */
.taskbar { flex: none; height: 40px; display: flex; background: linear-gradient(90deg, #cfe6ee, #d3e4ef 60%, #d0d9ec); }
.start { width: 48px; }
.find { width: 288px; display: flex; align-items: center; padding-left: 11px; background: #fff; border: 1px solid #bdbdbd; }
.find input { flex: 1; margin-left: 12px; background: none; font-size: 14px; }
.find input::placeholder { color: #333; }
.view { width: 50px; }
.app { width: 48px; margin-left: 1px; position: relative; }
.open::after { content: ""; position: absolute; left: 4px; right: 4px; bottom: 0; height: 2px; background: #0a74d0; }
.current { background: #eef6fa; }
.current::after { left: 0; right: 0; }
.tray { margin-left: auto; display: flex; align-items: stretch; }
.tray button { width: 24px; }
.clock { width: 64px; font-size: 12px; line-height: 18px; padding-top: 2px; text-align: center; }
.tray .notes { width: 40px; margin-right: 13px; }
```
